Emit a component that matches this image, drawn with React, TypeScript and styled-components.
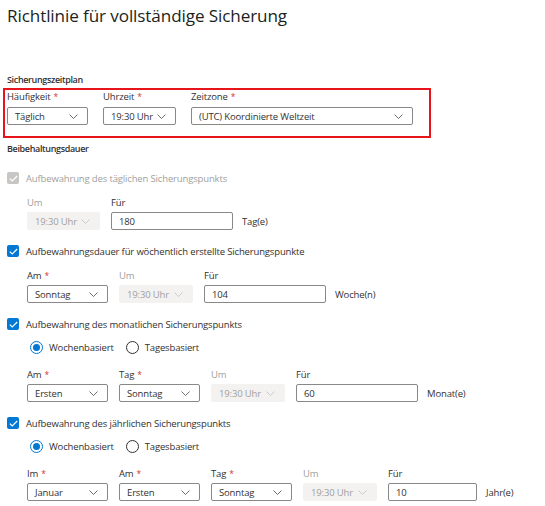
import styled, { createGlobalStyle } from "styled-components";

const GlobalStyle = createGlobalStyle`
	body {
		margin: 0;
		background: #ffffff;
		color: #323130;
		font-family: "Open Sans", "Noto Sans", sans-serif;
		letter-spacing: -0.15px;
	}
`;

const Page = styled.div`
	padding: 4px 7px 0;
`;

const Title = styled.h1`
	margin: 0;
	font-size: 17.1px;
	font-weight: 400;
	line-height: 24px;
	letter-spacing: -0.1px;
	color: #201f1e;
`;

const SectionTitle = styled.h2<{ $gap: number }>`
	margin: ${(p) => p.$gap}px 0 0;
	font-size: 9px;
	font-weight: 600;
	line-height: 14px;
	letter-spacing: -0.35px;
`;

const Highlight = styled.div`
	box-sizing: border-box;
	width: 428px;
	margin: 1px 0 0 -4px;
	padding: 0 0 11px 2px;
	border: 2px solid #e8141c;
	display: flex;
	gap: 15px;
`;

const Field = styled.div`
	display: flex;
	flex-direction: column;
`;

const InputGroup = styled.div`
	display: flex;
`;

const Label = styled.label<{ $disabled?: boolean; $tight?: boolean }>`
	display: block;
	height: 14px;
	font-size: 9.5px;
	line-height: 14px;
	margin-bottom: ${(p) => (p.$tight ? 2 : 3)}px;
	color: ${(p) => (p.$disabled ? "#a19f9d" : "#323130")};
`;

const Required = styled.span`
	color: #d13438;
	font-size: 8.5px;
	line-height: 14px;
	margin-left: 3px;
`;

const Select = styled.div<{ $width: number; $disabled?: boolean }>`
	box-sizing: border-box;
	width: ${(p) => p.$width}px;
	height: 18px;
	display: flex;
	align-items: center;
	justify-content: space-between;
	padding: 0 9px 0 7px;
	font-size: 9.5px;
	white-space: nowrap;
	border: 1px solid ${(p) => (p.$disabled ? "#f3f2f1" : "#8a8886")};
	border-radius: 2px;
	background: ${(p) => (p.$disabled ? "#f3f2f1" : "#ffffff")};
	color: ${(p) => (p.$disabled ? "#a19f9d" : "#323130")};
`;

const Input = styled.div<{ $width: number }>`
	box-sizing: border-box;
	width: ${(p) => p.$width}px;
	height: 18px;
	display: flex;
	align-items: center;
	padding: 0 7px;
	font-size: 9.5px;
	border: 1px solid #8a8886;
	border-radius: 2px;
`;

const Unit = styled.span`
	align-self: flex-end;
	margin: 0 0 1px 9px;
	font-size: 9.5px;
	line-height: 14px;
`;

const Section = styled.div<{ $gap: number }>`
	margin-top: ${(p) => p.$gap}px;
`;

const CheckRow = styled.div<{ $disabled?: boolean }>`
	display: flex;
	align-items: center;
	gap: 7px;
	height: 14px;
	font-size: 9.5px;
	color: ${(p) => (p.$disabled ? "#a19f9d" : "#323130")};
`;

const Box = styled.span<{ $disabled?: boolean }>`
	width: 12px;
	height: 12px;
	border-radius: 2px;
	display: flex;
	align-items: center;
	justify-content: center;
	background: ${(p) => (p.$disabled ? "#c8c6c4" : "#0078d4")};
`;

const RadioRow = styled.div`
	display: flex;
	align-items: center;
	height: 14px;
	margin-top: 9px;
	padding-left: 23px;
	font-size: 9.5px;
`;

const RadioOption = styled.span`
	display: flex;
	align-items: center;
	gap: 6px;
	margin-right: 12px;
`;

const RadioCircle = styled.span<{ $checked?: boolean }>`
	box-sizing: border-box;
	width: 13px;
	height: 13px;
	border-radius: 50%;
	border: 1px solid ${(p) => (p.$checked ? "#0078d4" : "#323130")};
	display: flex;
	align-items: center;
	justify-content: center;

	&::after {
		content: "";
		width: 7px;
		height: 7px;
		border-radius: 50%;
		background: ${(p) => (p.$checked ? "#0078d4" : "transparent")};
	}
`;

const ControlRow = styled.div<{ $gap: number }>`
	display: flex;
	gap: 11px;
	margin-top: ${(p) => p.$gap}px;
	padding-left: 20px;
`;

function Chevron({ color }: { color: string }) {
	return (
		<svg width="9" height="5" viewBox="0 0 9 5" fill="none">
			<path d="M0.5 0.5 L4.5 4.5 L8.5 0.5" stroke={color} strokeWidth="0.9" />
		</svg>
	);
}

function Check() {
	return (
		<svg width="9" height="7" viewBox="0 0 9 7" fill="none">
			<path d="M0.8 3.6 L3.2 6 L8.2 1" stroke="#ffffff" strokeWidth="1.2" />
		</svg>
	);
}

type Control =
	| { kind: "select"; label: string; value: string; width: number; required?: boolean; disabled?: boolean }
	| { kind: "input"; label: string; value: string; width: number; unit: string };

interface Retention {
	label: string;
	disabled?: boolean;
	radios?: boolean;
	gap: number;
	controls: Control[];
}

const um = (width: number): Control => ({
	kind: "select",
	label: "Um",
	value: "19:30 Uhr",
	width,
	disabled: true,
});

const retentions: Retention[] = [
	{
		label: "Aufbewahrung des täglichen Sicherungspunkts",
		disabled: true,
		gap: 15,
		controls: [um(73), { kind: "input", label: "Für", value: "180", width: 122, unit: "Tag(e)" }],
	},
	{
		label: "Aufbewahrungsdauer für wöchentlich erstellte Sicherungspunkte",
		gap: 14,
		controls: [
			{ kind: "select", label: "Am", value: "Sonntag", width: 81, required: true },
			um(74),
			{ kind: "input", label: "Für", value: "104", width: 122, unit: "Woche(n)" },
		],
	},
	{
		label: "Aufbewahrung des monatlichen Sicherungspunkts",
		radios: true,
		gap: 14,
		controls: [
			{ kind: "select", label: "Am", value: "Ersten", width: 81, required: true },
			{ kind: "select", label: "Tag", value: "Sonntag", width: 81, required: true },
			um(74),
			{ kind: "input", label: "Für", value: "60", width: 122, unit: "Monat(e)" },
		],
	},
	{
		label: "Aufbewahrung des jährlichen Sicherungspunkts",
		radios: true,
		gap: 14,
		controls: [
			{ kind: "select", label: "Im", value: "Januar", width: 81, required: true },
			{ kind: "select", label: "Am", value: "Ersten", width: 81, required: true },
			{ kind: "select", label: "Tag", value: "Sonntag", width: 81, required: true },
			um(74),
			{ kind: "input", label: "Für", value: "10", width: 89, unit: "Jahr(e)" },
		],
	},
];

function RetentionBlock({ item }: { item: Retention }) {
	return (
		<Section $gap={item.gap}>
			<CheckRow $disabled={item.disabled}>
				<Box $disabled={item.disabled}>
					<Check />
				</Box>
				{item.label}
			</CheckRow>
			{item.radios && (
				<RadioRow>
					<RadioOption>
						<RadioCircle $checked />
						Wochenbasiert
					</RadioOption>
					<RadioOption>
						<RadioCircle />
						Tagesbasiert
					</RadioOption>
				</RadioRow>
			)}
			<ControlRow $gap={item.radios ? 14 : 11}>
				{item.controls.map((c) =>
					c.kind === "select" ? (
						<Field key={c.label}>
							<Label $disabled={c.disabled} $tight>
								{c.label}
								{c.required && <Required>*</Required>}
							</Label>
							<Select $width={c.width} $disabled={c.disabled}>
								{c.value}
								<Chevron color={c.disabled ? "#c8c6c4" : "#605e5c"} />
							</Select>
						</Field>
					) : (
						<InputGroup key={c.label}>
							<Field>
								<Label $tight>{c.label}</Label>
								<Input $width={c.width}>{c.value}</Input>
							</Field>
							<Unit>{c.unit}</Unit>
						</InputGroup>
					)
				)}
			</ControlRow>
		</Section>
	);
}

export default function App() {
	return (
		<>
			<GlobalStyle />
			<Page>
				<Title>Richtlinie für vollständige Sicherung</Title>
				<SectionTitle $gap={45}>Sicherungszeitplan</SectionTitle>
				<Highlight>
					<Field>
						<Label>
							Häufigkeit<Required>*</Required>
						</Label>
						<Select $width={81}>
							Täglich
							<Chevron color="#605e5c" />
						</Select>
					</Field>
					<Field>
						<Label>
							Uhrzeit<Required>*</Required>
						</Label>
						<Select $width={73}>
							19:30 Uhr
							<Chevron color="#605e5c" />
						</Select>
					</Field>
					<Field>
						<Label>
							Zeitzone<Required>*</Required>
						</Label>
						<Select $width={222}>
							(UTC) Koordinierte Weltzeit
							<Chevron color="#605e5c" />
						</Select>
					</Field>
				</Highlight>
				<SectionTitle $gap={4}>Beibehaltungsdauer</SectionTitle>
				{retentions.map((r) => (
					<RetentionBlock key={r.label} item={r} />
				))}
			</Page>
		</>
	);
}
